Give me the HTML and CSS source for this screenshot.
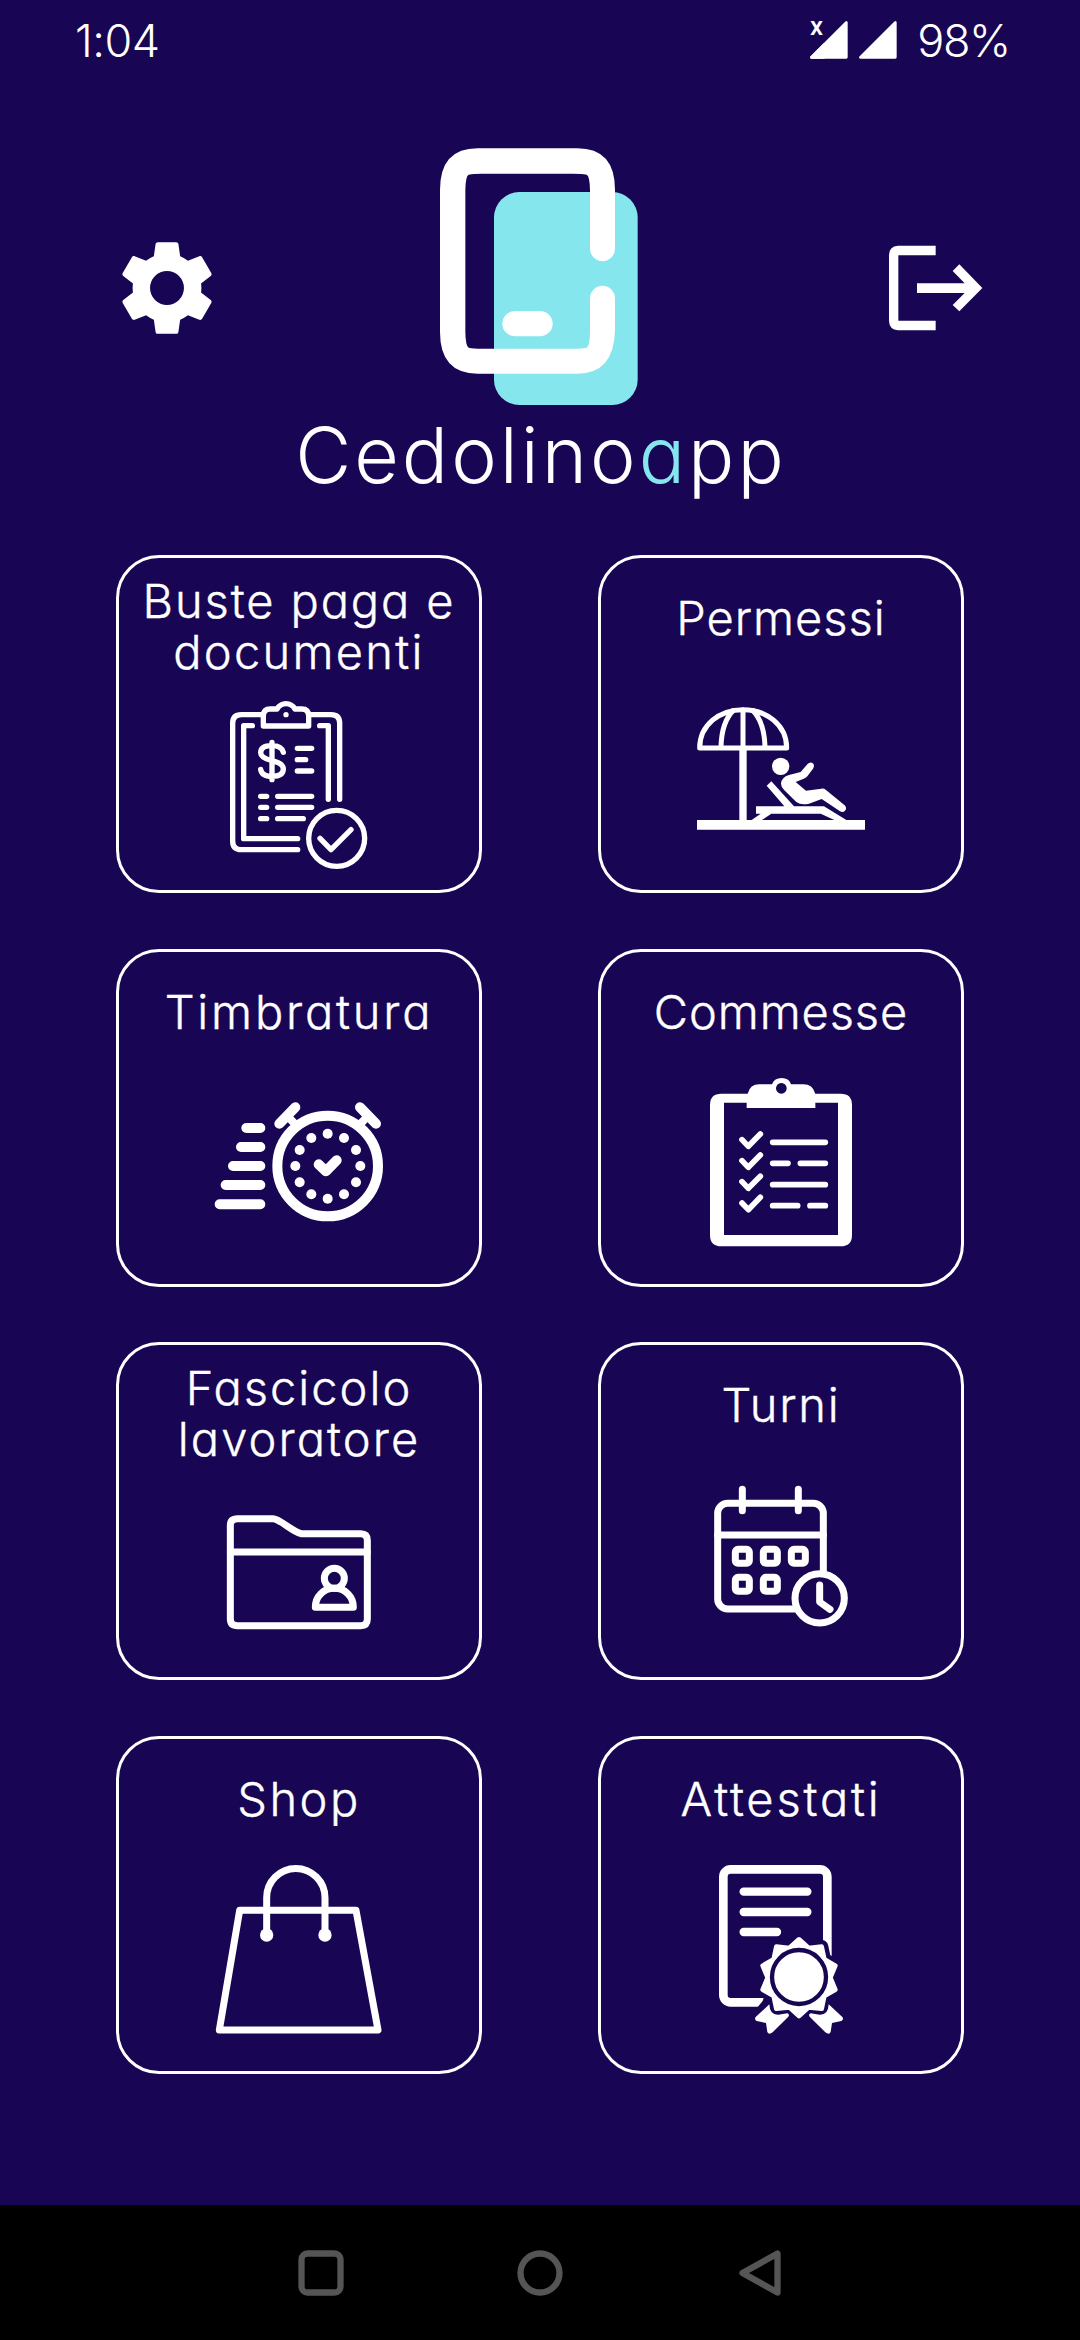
FILE: index.html
```html
<!DOCTYPE html>
<html lang="it">
<head>
  <meta charset="UTF-8" />
  <meta name="viewport" content="width=device-width, initial-scale=1.0"/>
  <title>Cedolinoapp</title>
  <link rel="stylesheet" href="styles.css">
</head>
<body>
  <div class="status-bar">
    <span class="clock">1:04</span>
    <svg class="signal" viewBox="90 60 264 120">
      <path d="M199 67V172H94Z M346 67V172H241Z" fill="#fff" stroke="#fff" stroke-width="8" stroke-linejoin="round"/>
      <path d="M84 56h48v48l-28 28h-20z" fill="#180654"/>
      <path d="M94 172L132 134V172Z" fill="#fff" stroke="#fff" stroke-width="8" stroke-linejoin="round"/>
      <text class="no-sim" x="90" y="105">x</text>
    </svg>
    <span class="battery">98%</span>
  </div>

  <header class="header">
    <svg class="settings" viewBox="0 0 24 24">
      <path fill="#fff" d="M19.43 12.98c.04-.32.07-.64.07-.98s-.03-.66-.07-.98l2.11-1.65c.19-.15.24-.42.12-.64l-2-3.46c-.12-.22-.39-.3-.61-.22l-2.49 1c-.52-.4-1.08-.73-1.69-.98l-.38-2.65C14.46 2.18 14.25 2 14 2h-4c-.25 0-.46.18-.49.42l-.38 2.65c-.61.25-1.17.59-1.69.98l-2.49-1c-.23-.09-.49 0-.61.22l-2 3.46c-.13.22-.07.49.12.64l2.11 1.65c-.04.32-.07.65-.07.98s.03.66.07.98l-2.11 1.65c-.19.15-.24.42-.12.64l2 3.46c.12.22.39.3.61.22l2.49-1c.52.4 1.08.73 1.69.98l.38 2.65c.03.24.24.42.49.42h4c.25 0 .46-.18.49-.42l.38-2.65c.61-.25 1.17-.59 1.69-.98l2.49 1c.23.09.49 0 .61-.22l2-3.46c.12-.22.07-.49-.12-.64l-2.11-1.65zM12 15.7a3.7 3.7 0 1 1 0-7.4 3.7 3.7 0 0 1 0 7.4z"/>
    </svg>
    <svg class="logo" viewBox="0 0 660 825">
      <rect x="192" y="156" width="431" height="639" rx="76" fill="#86e6ee"/>
      <path fill="#fff" d="M480 326V150Q479 107 470 104Q455 101 430 101H155Q130 101 116 104Q107 107 106 150V576Q107 620 116 623Q130 626 155 626H430Q455 626 470 623Q479 620 480 576V475A37.500 37.500 0 0 1 555 475V570Q552 701 442 701H143Q30 701 30 576V150Q30 25 143 25H442Q555 25 555 150V326A37.500 37.500 0 0 1 480 326Z"/>
      <rect x="217" y="513" width="151" height="76" rx="38" fill="#fff"/>
    </svg>
    <svg class="logout" viewBox="300 698 330 330">
      <path fill="#fff" d="M467 736H354Q327 738 327 764V962Q328 988 354 990H467V961H355V765H467Z"/>
      <path fill="#fff" d="M411 849H554L518 812L538 792L607 863L538 933L518 914L554 878H411Z"/>
    </svg>
  </header>
  <h1 class="brand">Cedolino<span>a</span>pp</h1>

  <main class="menu">
    <a class="card">
      <h2 class="t-buste">Buste paga e<br><span class="t-documenti">documenti</span></h2>
      <svg class="line" viewBox="316 483 504 504" stroke-width="16">
        <path d="M459 524H395Q369 524 369 550V903Q369 929 395 929H564 M600 524H664Q690 524 690 550V778"/>
        <path d="M428 557H402V896H564 M630 557H656V778"/>
        <path d="M461 558V528Q461 507 482 507H502Q512 491 529 491Q546 491 556 507H576Q597 507 597 528V558Z"/>
        <circle class="dot" cx="529" cy="524" r="8"/>
        <path d="M521 637Q516 617 487 617Q453 617 453 638Q453 653 487 662Q521 670 521 687Q521 709 487 709Q456 709 453 688M487 607V719"/>
        <path d="M563 625H606M563 659H588M563 693H606M453 769H471M504 769H606M453 802H471M504 802H606M453 836H471M504 836H581"/>
        <circle cx="681" cy="895" r="84"/>
        <path d="M631 895L664 929L724 869"/>
      </svg>
    </a>
    <a class="card">
      <h2 class="t-permessi">Permessi</h2>
      <svg class="line" viewBox="321 432 504 504" stroke-width="15">
        <path d="M329 624C329 555 389 509 459 509S590 555 590 624Z"/>
        <path d="M393 620Q395 545 432 509M525 620Q523 545 486 509" stroke-linecap="butt"/>
        <path d="M459 510V630"/>
        <path d="M459 625V850" stroke-width="22" stroke-linecap="butt"/>
        <path class="fill" d="M321 840H825V869H321Z"/>
        <circle class="dot" cx="572" cy="679" r="26"/>
        <path class="fill" d="M544 724L612 799H702L769 840H733L692 821H544L516 840H485L512 821H498V799H583L530 737Z"/>
        <path class="fill" d="M573 731Q575 711 597 705L632 696L652 673Q661 663 670 671Q674 678 669 686L652 709Q647 714 641 716L617 726L648 752L694 746Q702 745 708 750L764 796Q772 804 765 812Q759 819 750 814L695 777L657 791Q634 797 619 786L583 751Q573 741 573 731Z"/>
      </svg>
    </a>
    <a class="card">
      <h2 class="t-timbratura">Timbratura</h2>
      <svg class="line" viewBox="316 413 504 504" stroke-width="30">
        <path d="M410 563H452M394 620H452M370 677H452M348 734H452M330 792H452"/>
        <circle cx="654" cy="677" r="151"/>
        <path d="M509 550L557 501M751 501L799 550"/>
        <path d="M531 525L556 551M777 525L752 551" stroke-width="24" stroke-linecap="butt"/>
        <path d="M627 672L649 693L681 660"/>
        <g class="dot">
          <circle cx="654" cy="580" r="15"/><circle cx="703" cy="593" r="15"/><circle cx="739" cy="629" r="15"/>
          <circle cx="752" cy="677" r="15"/><circle cx="739" cy="726" r="15"/><circle cx="703" cy="762" r="15"/>
          <circle cx="654" cy="775" r="15"/><circle cx="605" cy="762" r="15"/><circle cx="570" cy="726" r="15"/>
          <circle cx="557" cy="677" r="15"/><circle cx="570" cy="629" r="15"/><circle cx="605" cy="593" r="15"/>
        </g>
      </svg>
    </a>
    <a class="card">
      <h2 class="t-commesse">Commesse</h2>
      <svg class="line" viewBox="321 413 504 504" stroke-width="17">
        <path class="fill" fill-rule="evenodd" d="M394 460H473Q480 432 508 432H546Q553 413 575 413Q597 413 603 432H640Q668 432 676 460H752Q786 460 786 494V884Q786 918 752 918H394Q360 918 360 884V494Q360 460 394 460ZM402 487V884H744V487H676V503H470V487ZM574 428A16 16 0 1 0 574.1 428Z"/>
        <path d="M456 598L475 618L511 581M456 661L475 681L511 644M456 724L475 744L511 708M456 788L475 808L511 771"/>
        <path d="M548 606H706M548 669H594M631 669H706M548 733H706M548 796H623M660 796H706"/>
      </svg>
    </a>
    <a class="card">
      <h2 class="t-fascicolo">Fascicolo<br><span class="t-lavoratore">lavoratore</span></h2>
      <svg class="line" viewBox="316 475 504 504" stroke-width="21">
        <path d="M362 587Q362 567 384 567H490C510 567 545 604 574 612H753Q773 612 773 632V868Q773 888 753 888H384Q362 888 362 868Z"/>
        <path d="M362 667H773"/>
        <circle cx="674" cy="746" r="30"/>
        <path d="M617 833C617 800 642 776 674 776S731 800 731 833Z"/>
      </svg>
    </a>
    <a class="card">
      <h2 class="t-turni">Turni</h2>
      <svg class="line" viewBox="321 424 504 504" stroke-width="21">
        <rect x="383" y="518" width="317" height="317" rx="30"/>
        <path d="M383 613H700M457 476V540M625 476V540"/>
        <rect x="436" y="656" width="42" height="42" rx="8"/>
        <rect x="520" y="656" width="42" height="42" rx="8"/>
        <rect x="604" y="656" width="42" height="42" rx="8"/>
        <rect x="436" y="740" width="42" height="42" rx="8"/>
        <rect x="520" y="740" width="42" height="42" rx="8"/>
        <circle cx="689" cy="803" r="74" fill="#180654"/>
        <path d="M689 763V814L720 836"/>
      </svg>
    </a>
    <a class="card">
      <h2 class="t-shop">Shop</h2>
      <svg class="line" viewBox="316 420 504 504" stroke-width="21">
        <path d="M390 556H739L805 915H329Z" />
        <path d="M471 630V518A87.500 87.500 0 0 1 646 518V630"/>
        <circle class="dot" cx="471" cy="630" r="20"/>
        <circle class="dot" cx="646" cy="630" r="20"/>
      </svg>
    </a>
    <a class="card">
      <h2 class="t-attestati">Attestati</h2>
      <svg class="line" viewBox="321 420 504 504" stroke-width="26">
        <rect x="400" y="433" width="312" height="399" rx="22"/>
        <path d="M461 500H652M461 561H652M461 621H561" stroke-width="25"/>
        <path fill="#180654" stroke="#180654" stroke-width="40" d="M627 643L656 669L695 665L703 703L736 722L721 758L736 794L703 813L695 851L656 847L627 873L598 847L559 851L551 813L518 794L533 758L518 722L551 703L559 665L598 669Z"/>
        <path fill="#180654" stroke="none" d="M518 828L500 850H740V760H540Z"/>
        <g class="fill">
          <path d="M538 838Q539 870 565 869L592 865Q600 868 595 875L548 922Q536 931 532 921L528 894L500 888Q492 883 497 876Z"/>
          <path d="M716 838Q715 870 689 869L662 865Q654 868 659 875L706 922Q718 931 722 921L726 894L754 888Q762 883 757 876Z"/>
        </g>
        <path fill="#fff" stroke-width="14" d="M627 643L656 669L695 665L703 703L736 722L721 758L736 794L703 813L695 851L656 847L627 873L598 847L559 851L551 813L518 794L533 758L518 722L551 703L559 665L598 669Z"/>
        <circle cx="627" cy="756" r="81" stroke="#180654" stroke-width="13"/>
      </svg>
    </a>
  </main>

  <nav class="nav-bar">
    <svg viewBox="0 0 46 46"><rect x="3.500" y="3.500" width="39" height="39" rx="6"/></svg>
    <svg viewBox="0 0 46 46"><circle cx="23" cy="23" r="19.500"/></svg>
    <svg viewBox="0 0 46 46"><path d="M41.500 3.500V42.500L6.500 23Z"/></svg>
  </nav>
</body>
</html>
```
FILE: styles.css
```css
* {
  box-sizing: border-box;
}
body {
  margin: 0;
  width: 1080px;
  height: 2340px;
  display: flex;
  flex-direction: column;
  background-color: #180654;
  color: #fff;
  font-family: Inter, "Open Sans", sans-serif;
  font-weight: 300;
  font-feature-settings: "cv11";
  overflow: hidden;
}
svg {
  display: block;
}

/* status bar */
.status-bar {
  height: 140px;
  padding: 14px 70px 0 75px;
  display: flex;
  align-items: flex-start;
  font-size: 45px;
  line-height: 54px;
}
.clock {
  margin-right: auto;
  letter-spacing: -0.5px;
}
.signal {
  width: 88px;
  height: 40px;
  margin: 6px 19px 0 0;
  overflow: visible;
}
.no-sim {
  font-family: Roboto, sans-serif;
  font-size: 78px;
  font-weight: 500;
  fill: #fff;
}
.battery {
  letter-spacing: -1.3px;
}

/* header */
.header {
  height: 275px;
  padding: 20px 90px 0 112px;
  display: flex;
  align-items: center;
}
.settings {
  width: 110px;
  height: 110px;
}
.logo {
  width: 220px;
  height: 275px;
  margin: -20px auto 0 208px;
}
.logout {
  width: 110px;
  height: 110px;
}
.brand {
  height: 140px;
  margin: 0;
  padding-top: 2px;
  font-size: 77px;
  font-weight: 300;
  line-height: 76px;
  text-align: center;
  letter-spacing: 3px;
  text-indent: 2px;
}
.brand span {
  color: #86e6ee;
}

/* menu */
.menu {
  flex: 1;
  padding: 0 116px;
  display: grid;
  grid-template-columns: 366px 366px;
  grid-auto-rows: 338px;
  align-content: start;
  gap: 55.7px 116px;
}
.card {
  display: flex;
  flex-direction: column;
  align-items: center;
  justify-content: space-evenly;
  border: 3px solid #fff;
  border-radius: 43px;
}
.card h2 {
  margin: -3px 0 3px;
  font-size: 47px;
  font-weight: 300;
  line-height: 50.5px;
  text-align: center;
  white-space: nowrap;
  -webkit-text-stroke: 0.4px #fff;
}
.card svg {
  width: 168px;
  height: 168px;
  overflow: visible;
}
.t-buste { letter-spacing: 1.9px; }
.t-documenti { letter-spacing: 2.3px; }
.t-permessi { letter-spacing: 1px; }
.t-timbratura { letter-spacing: 2.8px; }
.t-commesse { letter-spacing: 0.9px; }
.t-fascicolo { letter-spacing: 2px; }
.t-lavoratore { letter-spacing: 2.1px; }
.t-turni { letter-spacing: 1.8px; }
.t-shop { letter-spacing: 2.5px; }
.t-attestati { letter-spacing: 2.8px; }

.line {
  fill: none;
  stroke: #fff;
  stroke-linecap: round;
  stroke-linejoin: round;
}
.dot,
.fill {
  fill: #fff;
  stroke: none;
}

/* android navigation */
.nav-bar {
  height: 135px;
  display: flex;
  justify-content: center;
  align-items: center;
  gap: 173px;
  background-color: #000;
}
.nav-bar svg {
  width: 46px;
  height: 46px;
  fill: none;
  stroke: #555;
  stroke-width: 6.3;
  stroke-linejoin: round;
}
```
